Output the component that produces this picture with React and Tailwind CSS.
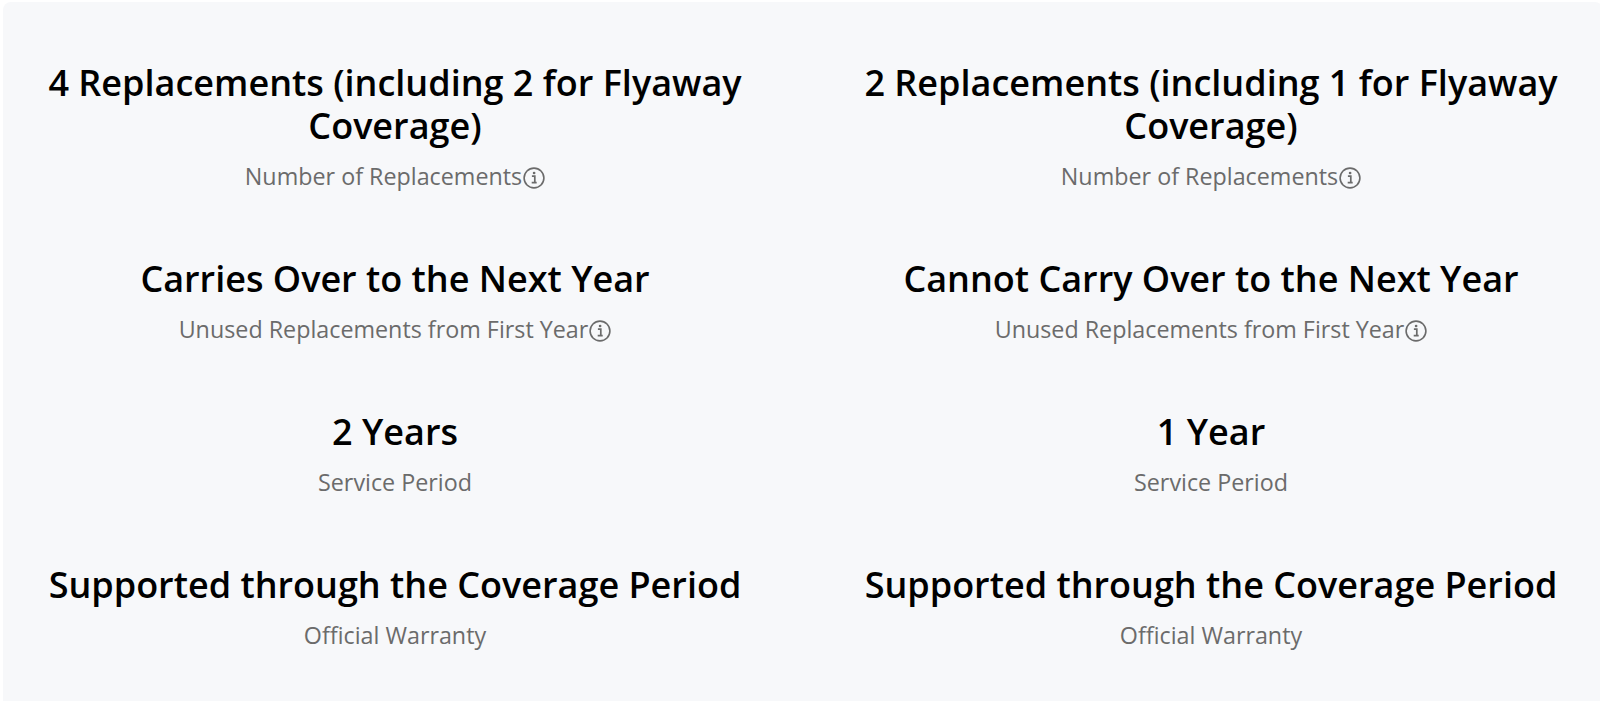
import React from "react";

function InfoIcon() {
  return (
    <svg
      width="22"
      height="22"
      viewBox="0 0 22 22"
      fill="none"
      className="inline-block ml-[1px] align-[-4px]"
    >
      <circle cx="11" cy="11" r="9.9" stroke="#6b6b6b" strokeWidth="1.6" />
      <circle cx="11.1" cy="6" r="1.35" fill="#6b6b6b" />
      <path
        d="M8.9 9.1 H11.8 V15.2 M8.7 15.7 H13.7"
        stroke="#6b6b6b"
        strokeWidth="1.7"
        strokeLinecap="butt"
      />
    </svg>
  );
}

const left = [
  { v: "4 Replacements (including 2 for Flyaway Coverage)", l: "Number of Replacements", info: true },
  { v: "Carries Over to the Next Year", l: "Unused Replacements from First Year", info: true },
  { v: "2 Years", l: "Service Period" },
  { v: "Supported through the Coverage Period", l: "Official Warranty" },
];

const right = [
  { v: "2 Replacements (including 1 for Flyaway Coverage)", l: "Number of Replacements", info: true },
  { v: "Cannot Carry Over to the Next Year", l: "Unused Replacements from First Year", info: true },
  { v: "1 Year", l: "Service Period" },
  { v: "Supported through the Coverage Period", l: "Official Warranty" },
];

function Column({ items }) {
  return (
    <div className="flex flex-col items-center gap-[64px]">
      {items.map((it, i) => (
        <div key={i} className="flex flex-col items-center text-center">
          <div className="text-[36px] leading-[43px] font-semibold text-black">
            {it.v}
          </div>
          <div className="mt-3 text-[23.3px] leading-[34px] text-[#6b6b6b]">
            {it.l}
            {it.info && <InfoIcon />}
          </div>
        </div>
      ))}
    </div>
  );
}

export default function App() {
  return (
    <div
      className="w-[1600px] h-[701px] overflow-hidden bg-white"
      style={{ fontFamily: '"Open Sans", "Noto Sans", sans-serif' }}
    >
      <div className="ml-[3px] mt-[2px] w-[1600px] h-[760px] rounded-lg bg-[#f7f8fa] pt-[59px]">
        <div className="grid grid-cols-2 gap-x-8">
          <Column items={left} />
          <Column items={right} />
        </div>
      </div>
    </div>
  );
}
